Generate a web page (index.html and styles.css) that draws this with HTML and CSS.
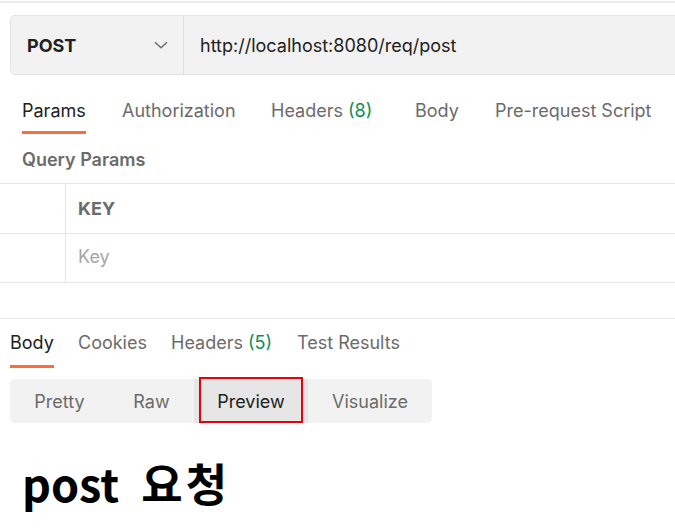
FILE: index.html
```html
<!DOCTYPE html>
<html>
<head>
<meta charset="utf-8">
<link rel="stylesheet" href="styles.css">
</head>
<body>
<div class="topline"></div>
<div class="reqbar">
  <div class="method">
    <span class="method-name">POST</span>
    <svg class="chev" width="14" height="8" viewBox="0 0 14 8"><path d="M1 1.2 L7 6.8 L13 1.2" fill="none" stroke="#6b6b6b" stroke-width="1.5"/></svg>
  </div>
  <div class="url">http://localhost:8080/req/post</div>
</div>
<div class="tabs req-tabs">
  <div class="tab w1"><span class="lbl active">Params</span></div>
  <div class="tab w2"><span class="lbl">Authorization</span></div>
  <div class="tab w3"><span class="lbl">Headers <span class="count">(8)</span></span></div>
  <div class="tab w4"><span class="lbl">Body</span></div>
  <div class="tab"><span class="lbl">Pre-request Script</span></div>
</div>
<div class="qp-title">Query Params</div>
<div class="table">
  <div class="row head">
    <div class="cell-chk"></div>
    <div class="cell">KEY</div>
  </div>
  <div class="row">
    <div class="cell-chk"></div>
    <div class="cell placeholder">Key</div>
  </div>
</div>
<div class="resp">
  <div class="tabs resp-tabs">
    <div class="tab r1"><span class="lbl active">Body</span></div>
    <div class="tab r2"><span class="lbl">Cookies</span></div>
    <div class="tab r3"><span class="lbl">Headers <span class="count">(5)</span></span></div>
    <div class="tab"><span class="lbl">Test Results</span></div>
  </div>
  <div class="seg">
    <div class="seg-item pretty">Pretty</div>
    <div class="seg-item raw">Raw</div>
    <div class="seg-item preview">Preview<div class="hl"></div></div>
    <div class="seg-item vis">Visualize</div>
  </div>
  <h1 class="preview-h">post <span class="ko">요청</span></h1>
</div>
</body>
</html>
```
FILE: styles.css
```css
* { box-sizing: border-box; }
body {
  margin: 0;
  width: 675px;
  height: 531px;
  overflow: hidden;
  background: #fff;
  font-family: Inter, "Noto Sans", sans-serif;
  color: #212121;
}
.topline {
  height: 2px;
  margin-top: 1px;
  background: #ededed;
}
.reqbar {
  margin: 12px 0 0 10px;
  width: 680px;
  height: 60px;
  display: flex;
  background: #f2f2f2;
  border: 1px solid #e3e3e3;
  border-radius: 5px;
}
.method {
  width: 173px;
  flex: none;
  display: flex;
  align-items: center;
  justify-content: space-between;
  padding: 0 15px 0 16px;
  border-right: 1px solid #e0e0e0;
}
.method-name {
  font-weight: 700;
  font-size: 18px;
  color: #212121;
}
.url {
  display: flex;
  align-items: center;
  padding-left: 16px;
  font-size: 18px;
  color: #212121;
}
.tabs {
  display: flex;
  font-size: 18px;
  line-height: 22px;
  color: #6b6b6b;
}
.tab { flex: none; }
.lbl {
  position: relative;
  display: inline-block;
  white-space: nowrap;
}
.lbl.active { color: #212121; }
.lbl.active::after {
  content: "";
  position: absolute;
  left: 0;
  right: 0;
  height: 3px;
  background: #ff6c37;
}
.count { color: #0c8e5a; }
.req-tabs {
  margin-top: 25px;
  padding-left: 22px;
}
.w1 { width: 100px; }
.w2 { width: 149px; }
.w3 { width: 144px; }
.w4 { width: 80px; }
.req-tabs .lbl.active::after { top: 31px; }
.qp-title {
  margin-top: 27px;
  padding-left: 22px;
  font-size: 18px;
  font-weight: 600;
  color: #6b6b6b;
  height: 22px;
  line-height: 22px;
  margin-bottom: 12px;
}
.table {
  border-top: 1px solid #e6e6e6;
}
.row {
  display: flex;
  height: 50px;
  border-bottom: 1px solid #e6e6e6;
}
.row + .row { height: 49px; }
.cell-chk {
  width: 66px;
  border-right: 1px solid #e6e6e6;
}
.cell {
  display: flex;
  align-items: center;
  padding-left: 12px;
  font-size: 18px;
}
.head .cell {
  font-weight: 700;
  color: #6b6b6b;
}
.placeholder {
  color: #a6a6a6;
  padding-bottom: 4px;
}
.resp {
  margin-top: 35px;
  border-top: 1px solid #ededed;
}
.resp-tabs {
  margin-top: 13px;
  padding-left: 10px;
}
.r1 { width: 68px; }
.r2 { width: 93px; }
.r3 { width: 126px; }
.resp-tabs .lbl.active::after { top: 33px; }
.seg {
  margin: 25px 0 0 10px;
  width: 422px;
  height: 44px;
  display: flex;
  background: #f2f2f2;
  border-radius: 5px;
  font-size: 18px;
  color: #6b6b6b;
}
.seg-item {
  flex: none;
  display: flex;
  align-items: center;
  justify-content: center;
  position: relative;
}
.pretty { width: 99px; }
.raw { width: 85px; }
.preview {
  width: 114px;
  background: #e6e6e6;
  color: #212121;
}
.vis { width: 124px; }
.hl {
  position: absolute;
  left: 5px;
  top: -2px;
  width: 104px;
  height: 46px;
  border: 2px solid #e8000b;
}
.preview-h {
  margin: 30px 0 0 22px;
  font-family: "Noto Sans CJK KR", "Noto Sans", sans-serif;
  font-weight: 700;
  font-size: 45px;
  color: #000;
  line-height: 60px;
  word-spacing: 12px;
}
.ko { letter-spacing: 3px; }
```
